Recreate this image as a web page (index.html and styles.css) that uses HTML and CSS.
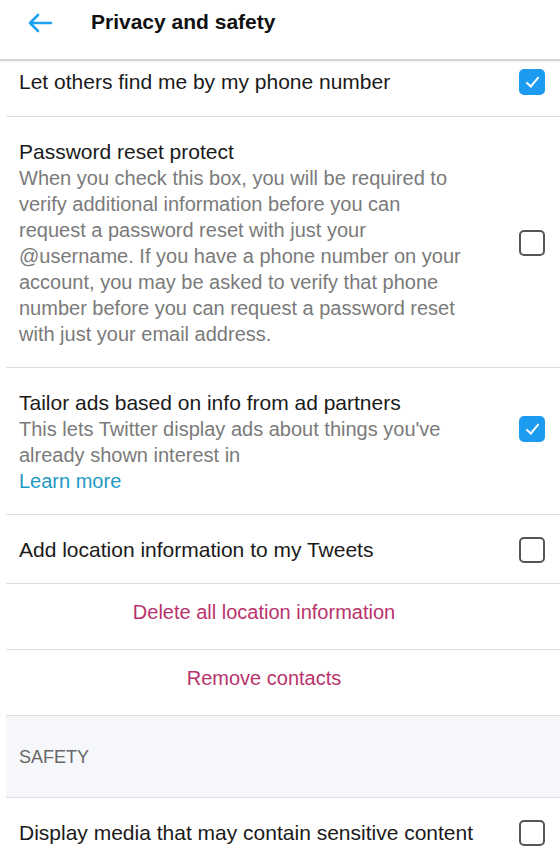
FILE: index.html
```html
<!DOCTYPE html>
<html lang="en">
<head>
  <meta charset="UTF-8" />
  <meta name="viewport" content="width=device-width, initial-scale=1.0"/>
  <title>Privacy and safety</title>
  <link rel="stylesheet" href="styles.css">
</head>
<body>

  <div class="topbar">
    <svg class="back" width="26" height="20" viewBox="0 0 26 20">
      <path d="M24 10H3M11 2L3 10l8 8" fill="none" stroke="#1da1f2" stroke-width="2.6" stroke-linecap="round" stroke-linejoin="round"/>
    </svg>
    <h1>Privacy and safety</h1>
  </div>

  <div class="list">
    <div class="row first">
      <div class="text">
        <div class="title">Let others find me by my phone number</div>
      </div>
      <span class="box checked"></span>
    </div>

    <div class="row">
      <div class="text">
        <div class="title">Password reset protect</div>
        <div class="desc">When you check this box, you will be required to verify additional information before you can request a password reset with just your @username. If you have a phone number on your account, you may be asked to verify that phone number before you can request a password reset with just your email address.</div>
      </div>
      <span class="box"></span>
    </div>

    <div class="row top">
      <div class="text">
        <div class="title">Tailor ads based on info from ad partners</div>
        <div class="desc">This lets Twitter display ads about things you've already shown interest in</div>
        <a class="learn" href="#">Learn more</a>
      </div>
      <span class="box checked"></span>
    </div>

    <div class="row">
      <div class="text">
        <div class="title">Add location information to my Tweets</div>
      </div>
      <span class="box"></span>
    </div>

    <div class="row action">Delete all location information</div>
    <div class="row action">Remove contacts</div>

    <div class="section">SAFETY</div>

    <div class="row">
      <div class="text">
        <div class="title">Display media that may contain sensitive content</div>
      </div>
      <span class="box"></span>
    </div>
  </div>

</body>
</html>
```

FILE: styles.css
```css
body {
  margin: 0;
  background: #fff;
  font-family: 'Liberation Sans', Arial, sans-serif;
  color: #1a1a1a;
}
.topbar {
  display: flex;
  align-items: center;
  height: 59px;
  padding-left: 27px;
  border-bottom: 2px solid #d3d6dc;
  box-shadow: 0 1px 2px rgba(0,0,0,0.06);
}
.topbar .back {
  margin-top: -14px;
}
.topbar h1 {
  margin: -15px 0 0 38px;
  font-size: 21px;
  font-weight: bold;
  color: #111;
}
.list {
  margin-left: 6px;
}
.row {
  display: flex;
  align-items: center;
  gap: 12px;
  padding: 22px 15px 20px 13px;
  border-bottom: 1.5px solid #dedede;
  font-size: 21px;
  line-height: 26px;
}
.row.first {
  padding-top: 8px;
  padding-bottom: 21px;
}
.row.top {
  align-items: flex-start;
}
.row.top .box {
  margin-top: 26px;
}
.text {
  flex: 1;
}
.desc {
  max-width: 445px;
  font-size: 20px;
  color: #7a7a7a;
}
.learn {
  font-size: 20px;
  color: #1f9ac4;
  text-decoration: none;
}
.box {
  margin-left: auto;
  width: 22px;
  height: 22px;
  border: 2px solid #555;
  border-radius: 5px;
  flex-shrink: 0;
  position: relative;
}
.box.checked {
  background: #1d9bf0;
  border-color: #1d9bf0;
}
.box.checked::after {
  content: "";
  position: absolute;
  left: 8px;
  top: 3px;
  width: 5px;
  height: 11px;
  border: solid #fff;
  border-width: 0 2px 2px 0;
  transform: rotate(40deg);
}
.row.action {
  justify-content: center;
  padding: 15px 38px 24px 0;
  font-size: 20px;
  color: #b9336c;
}
.section {
  background: #f5f7fa;
  padding: 29px 13px 28px;
  border-bottom: 1.5px solid #dedede;
  font-size: 18px;
  line-height: 24px;
  color: #666;
}
```
